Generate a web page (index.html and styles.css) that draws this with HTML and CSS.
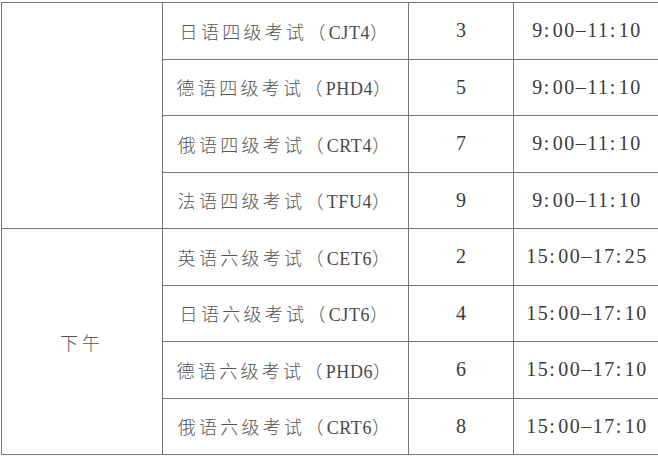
FILE: index.html
```html
<!DOCTYPE html>
<html lang="zh">
<head>
<meta charset="utf-8">
<link rel="stylesheet" href="styles.css">
</head>
<body>
<table class="sched">
  <colgroup>
    <col class="c1"><col class="c2"><col class="c3"><col class="c4">
  </colgroup>
  <tr>
    <td rowspan="4" class="period"></td>
    <td class="exam">日语四级考试（<span class="code">CJT4</span>）</td><td class="num">3</td><td class="time">9<span class="colon">:</span>00–11<span class="colon">:</span>10</td>
  </tr>
  <tr><td class="exam">德语四级考试（<span class="code">PHD4</span>）</td><td class="num">5</td><td class="time">9<span class="colon">:</span>00–11<span class="colon">:</span>10</td></tr>
  <tr><td class="exam">俄语四级考试（<span class="code">CRT4</span>）</td><td class="num">7</td><td class="time">9<span class="colon">:</span>00–11<span class="colon">:</span>10</td></tr>
  <tr><td class="exam">法语四级考试（<span class="code">TFU4</span>）</td><td class="num">9</td><td class="time">9<span class="colon">:</span>00–11<span class="colon">:</span>10</td></tr>
  <tr>
    <td rowspan="4" class="period">下午</td>
    <td class="exam">英语六级考试（<span class="code">CET6</span>）</td><td class="num">2</td><td class="time">15<span class="colon">:</span>00–17<span class="colon">:</span>25</td>
  </tr>
  <tr><td class="exam">日语六级考试（<span class="code">CJT6</span>）</td><td class="num">4</td><td class="time">15<span class="colon">:</span>00–17<span class="colon">:</span>10</td></tr>
  <tr><td class="exam">德语六级考试（<span class="code">PHD6</span>）</td><td class="num">6</td><td class="time">15<span class="colon">:</span>00–17<span class="colon">:</span>10</td></tr>
  <tr><td class="exam">俄语六级考试（<span class="code">CRT6</span>）</td><td class="num">8</td><td class="time">15<span class="colon">:</span>00–17<span class="colon">:</span>10</td></tr>
</table>
</body>
</html>
```

FILE: styles.css
```css
html, body {
  margin: 0;
  padding: 0;
  background: #ffffff;
  overflow: hidden;
}
body {
  width: 658px;
  height: 456px;
}
.sched {
  margin: 2px 0 0 1px;
  border-collapse: collapse;
  table-layout: fixed;
  width: 659px;
  font-family: "Liberation Serif", "Noto Sans CJK SC", serif;
  font-size: 20px;
  color: #3a3a3a;
}
.c1 { width: 161px; }
.c2 { width: 246px; }
.c3 { width: 105px; }
.c4 { width: 147px; }
.sched td {
  border: 1px solid #777;
  height: 55.5px;
  padding: 0;
  text-align: center;
  vertical-align: middle;
  white-space: nowrap;
}
.exam {
  font-size: 18px;
  letter-spacing: 3.3px;
  font-weight: 300;
  color: #555;
  padding-left: 2px;
}
.code {
  font-weight: 400;
  letter-spacing: 0.6px;
  color: #4a4a4a;
}
.period {
  font-family: "Noto Sans CJK SC", sans-serif;
  font-size: 18px;
  font-weight: 300;
  letter-spacing: 4px;
  color: #555;
  padding-left: 6px;
}
.num {
  color: #3a3a3a;
}
.time {
  letter-spacing: 1.5px;
  color: #3a3a3a;
}
.colon {
  margin-right: 2px;
}
```
